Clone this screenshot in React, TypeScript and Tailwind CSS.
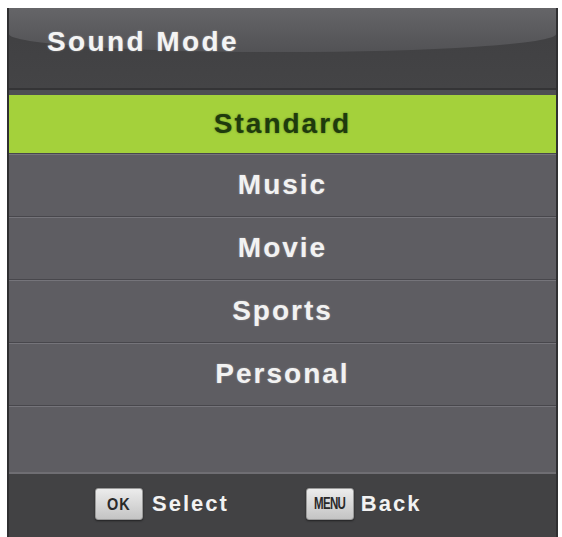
const items = ['Standard', 'Music', 'Movie', 'Sports', 'Personal'];

function Badge({ label, menu }: { label: string; menu?: boolean }) {
  return (
    <div className="flex h-[32px] w-[48px] items-center justify-center rounded-[3px] border border-[#9a9a9a] bg-gradient-to-b from-[#ececec] to-[#c4c4c4] shadow-[0_1px_2px_rgba(0,0,0,0.5)]">
      {menu ? (
        <span className="inline-block scale-x-[0.72] text-[16px] leading-none font-bold tracking-[-1px] text-[#2a2a2a]">
          {label}
        </span>
      ) : (
        <span className="inline-block scale-x-[0.85] text-[17px] leading-none font-bold tracking-[1px] text-[#2a2a2a]">
          {label}
        </span>
      )}
    </div>
  );
}

export default function App() {
  return (
    <div className="h-[537px] w-[562px] overflow-hidden bg-white pt-[8px] pl-[7px] font-['Liberation_Sans',Arial,sans-serif]">
      <div className="flex h-[529px] w-[551px] flex-col border-x-2 border-[#2f2f31] bg-[#5e5d62]">
        {/* title bar */}
        <div className="relative h-[80px] bg-gradient-to-b from-[#3f3f41] to-[#444446]">
          <div className="absolute inset-x-0 top-0 h-[44px] rounded-[0_0_50%_50%/0_0_18px_18px] bg-gradient-to-b from-[#656568] to-[#525255]" />
          <div className="relative pt-[20px] pl-[38px] text-[28px] leading-none font-bold tracking-[2.4px] text-[#f4f4f4] [text-shadow:0_0_2px_rgba(255,255,255,0.4)]">
            Sound Mode
          </div>
        </div>
        <div className="h-[7px] border-t-2 border-[#343436] bg-[#4e4e53]" />

        {items.map((item, i) =>
          i === 0 ? (
            <div
              key={item}
              className="flex h-[58px] items-center justify-center bg-[#a4d13b] text-[28px] leading-none font-bold tracking-[2px] text-[#1f3b0d] [text-shadow:0_0_2px_rgba(20,50,0,0.5)]"
            >
              {item}
            </div>
          ) : (
            <div
              key={item}
              className="flex h-[63px] items-center justify-center border-t border-[#48474c] text-[28px] leading-none font-bold tracking-[2px] text-[#f2f2f2] shadow-[inset_0_1px_0_#75747a] [text-shadow:0_0_2px_rgba(255,255,255,0.35)]"
            >
              {item}
            </div>
          ),
        )}
        <div className="h-[67px] border-t border-[#48474c] shadow-[inset_0_1px_0_#75747a]" />

        {/* footer */}
        <div className="flex flex-1 items-start border-t-2 border-[#6f6e73] bg-[#424244] pt-[14px] pl-[86px]">
          <div className="flex items-center gap-[9px]">
            <Badge label="OK" />
            <span className="text-[22px] leading-none font-bold tracking-[2px] text-[#f2f2f2]">Select</span>
          </div>
          <div className="ml-[77px] flex items-center gap-[7px]">
            <Badge label="MENU" menu />
            <span className="text-[22px] leading-none font-bold tracking-[2px] text-[#f2f2f2]">Back</span>
          </div>
        </div>
      </div>
    </div>
  );
}
